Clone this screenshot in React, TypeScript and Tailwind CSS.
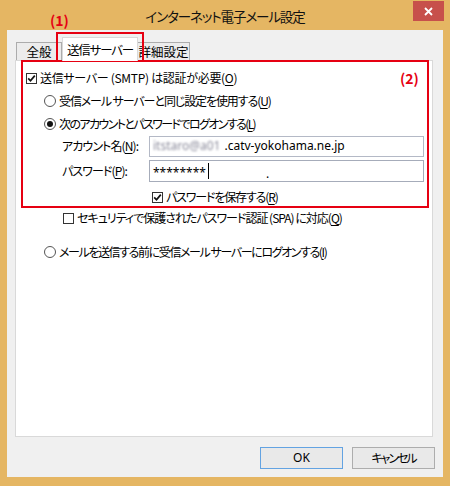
import type { ReactNode } from 'react';

const font = 'font-["Noto_Sans_CJK_JP","Noto_Sans",sans-serif]';

function CheckBox({ checked }: { checked?: boolean }) {
  return (
    <span className="flex h-[11px] w-[11px] shrink-0 items-center justify-center border border-[#333] bg-white">
      {checked && (
        <svg width="9" height="9" viewBox="0 0 9 9">
          <path d="M1.2 4.4 L3.5 6.8 L7.8 1.6" fill="none" stroke="#111" strokeWidth="1.7" />
        </svg>
      )}
    </span>
  );
}

function Radio({ checked }: { checked?: boolean }) {
  return (
    <span className="flex h-[12px] w-[12px] shrink-0 items-center justify-center rounded-full border border-[#555] bg-white">
      {checked && <span className="h-[6px] w-[6px] rounded-full bg-[#111]" />}
    </span>
  );
}

function Key({ k }: { k: string }) {
  return <span className="underline underline-offset-[2px]">{k}</span>;
}

function Row({ className, children }: { className: string; children: ReactNode }) {
  return <div className={`flex items-center gap-[3px] whitespace-nowrap ${className}`}>{children}</div>;
}

export default function App() {
  return (
    <div
      className={`relative flex h-[486px] w-[450px] flex-col bg-[#e5b663] text-[12px] leading-[16px] text-black [font-feature-settings:'palt'] ${font}`}
    >
      {/* title bar */}
      <div className="grid h-[30px] grid-cols-[1fr_auto_1fr]">
        <div />
        <div className="self-center pt-[1px] text-[13.5px] tracking-[-1.1px] text-[#111]">
          インターネット電子メール設定
        </div>
        <div className="flex justify-end pr-[6px] pt-[1px]">
          <div className="flex h-[20px] w-[31px] items-center justify-center bg-[#c7504b]">
            <svg width="9" height="9" viewBox="0 0 9 9">
              <path d="M1 1 L8 8 M8 1 L1 8" stroke="#fff" strokeWidth="1.8" />
            </svg>
          </div>
        </div>
      </div>

      {/* client area */}
      <div className="mx-[7px] mb-[9px] flex flex-1 flex-col bg-[#f0f0f0] pb-[8px] pl-[8px] pr-[10px] pt-[7px]">
        {/* tabs */}
        <div className="flex h-[23px] items-end pl-[1px] text-[12.5px]">
          <div className="flex h-[18px] w-[46px] items-center justify-center border border-b-0 border-[#acacac] bg-[#ececec]">
            全般
          </div>
          <div className="relative z-10 -mb-[1px] flex h-[24px] w-[76px] items-start justify-center border border-b-0 border-[#d9d9d9] bg-white pt-[4px] tracking-[-1.2px]">
            送信サーバー
          </div>
          <div className="flex h-[18px] w-[52px] items-center justify-center border border-b-0 border-l-0 border-[#acacac] bg-[#ececec]">
            詳細設定
          </div>
        </div>

        {/* panel */}
        <div className="flex flex-1 flex-col border border-[#d9d9d9] bg-white pl-[10px] pt-[6px]">
          <Row className="h-[22px] tracking-[-0.3px]">
            <CheckBox checked />
            <span>
              送信サーバー (SMTP) は認証が必要(<Key k="O" />)
            </span>
          </Row>
          <Row className="ml-[18px] h-[23px] tracking-[-1.1px]">
            <Radio />
            <span>
              受信メール サーバーと同じ設定を使用する(<Key k="U" />)
            </span>
          </Row>
          <Row className="ml-[18px] h-[23px] tracking-[-1.6px]">
            <Radio checked />
            <span>
              次のアカウントとパスワードでログオンする(<Key k="L" />)
            </span>
          </Row>
          <div className="ml-[36px] flex h-[22px] items-center whitespace-nowrap">
            <span className="w-[87px] shrink-0 tracking-[-0.9px]">
              アカウント名(<Key k="N" />):
            </span>
            <div className="flex h-[21px] w-[275px] items-center border border-[#b4b9c6] bg-white pl-[3px] font-['Noto_Sans',sans-serif] text-[12px]">
              <span className="pr-[4px] text-[#8a8a9a] blur-[1.3px]">itstaro@a01</span>
              <span>.catv-yokohama.ne.jp</span>
            </div>
          </div>
          <div className="ml-[36px] mt-[3px] flex h-[22px] items-center whitespace-nowrap">
            <span className="w-[87px] shrink-0 tracking-[-0.9px]">
              パスワード(<Key k="P" />):
            </span>
            <div className="flex h-[22px] w-[275px] items-center border border-[#a6acba] bg-white pl-[3px] font-['Noto_Sans',sans-serif] text-[12px]">
              <span className="pt-[4px] leading-[12px]">********</span>
              <span className="ml-[2px] h-[16px] w-[1px] bg-black" />
              <span className="ml-[57px] pt-[6px] leading-[10px]">.</span>
            </div>
          </div>
          <Row className="ml-[126px] mt-[4px] h-[22px] tracking-[-1.15px]">
            <CheckBox checked />
            <span>
              パスワードを保存する(<Key k="R" />)
            </span>
          </Row>
          <Row className="ml-[37px] h-[20px] tracking-[-1px]">
            <CheckBox />
            <span>
              セキュリティで保護されたパスワード認証 (SPA) に対応(<Key k="Q" />)
            </span>
          </Row>
          <Row className="ml-[18px] mt-[13px] h-[22px] tracking-[-1.4px]">
            <Radio />
            <span>
              メールを送信する前に受信メール サーバーにログオンする(<Key k="I" />)
            </span>
          </Row>
        </div>

        {/* buttons */}
        <div className="mt-[10px] flex justify-end gap-[9px]">
          <button className="flex h-[22px] w-[83px] items-center justify-center border border-[#63a3e2] bg-[#e9e9e9] font-['Noto_Sans',sans-serif]">
            OK
          </button>
          <button className="-mr-[2px] flex h-[22px] w-[83px] items-center justify-center border border-[#adadad] bg-[#e9e9e9] tracking-[-2px]">
            キャンセル
          </button>
        </div>
      </div>

      {/* annotations */}
      <div className="absolute left-[50px] top-[12px] text-[14px] font-bold leading-[16px] text-[#e60012]">(1)</div>
      <div className="absolute left-[56px] top-[32px] h-[30px] w-[88px] border-2 border-[#e60012]" />
      <div className="absolute left-[21px] top-[60px] h-[148px] w-[408px] border-2 border-[#e60012]" />
      <div className="absolute left-[400px] top-[70px] text-[14px] font-bold leading-[16px] text-[#e60012]">(2)</div>
    </div>
  );
}
